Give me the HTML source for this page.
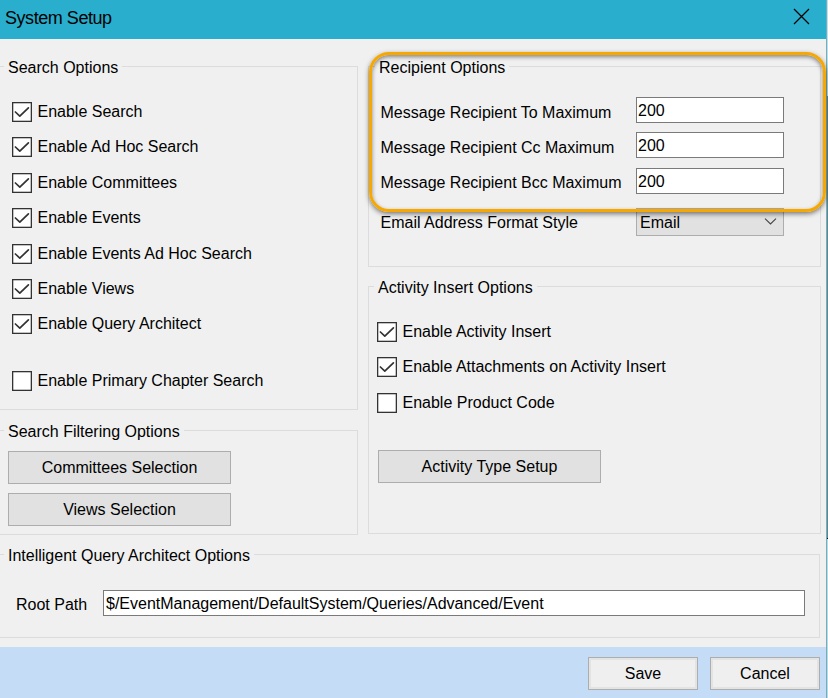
<!DOCTYPE html>
<html><head><meta charset="utf-8">
<style>
html,body{margin:0;padding:0;}
body{width:828px;height:698px;position:relative;overflow:hidden;background:#f0f0f0;font-family:"Liberation Sans",sans-serif;font-size:16px;color:#000;}
.a{position:absolute;}
.t{position:absolute;white-space:nowrap;line-height:18px;height:18px;}
.gb{position:absolute;box-sizing:border-box;border:1px solid #dcdcdc;}
.gt{position:absolute;white-space:nowrap;line-height:18px;background:#f0f0f0;padding:0 4px;}
.cb{position:absolute;width:20px;height:20px;}
.cb svg{position:absolute;left:0;top:0;}
.btn{position:absolute;box-sizing:border-box;border:1px solid #adadad;background:#e1e1e1;text-align:center;line-height:31px;}
.tb{position:absolute;box-sizing:border-box;border:1px solid #7a7a7a;background:#fff;line-height:18px;}
.fbtn{position:absolute;box-sizing:border-box;border:1px solid #adadad;background:#efefef;box-shadow:inset 0 0 0 2px #e3e3e3;text-align:center;line-height:31px;}
</style></head><body>

<!-- title bar -->
<div class="a" style="left:0;top:0;width:826px;height:39px;background:#29aecd;"></div>
<div class="t" style="left:5px;top:9px;font-size:18px;letter-spacing:-0.45px;">System Setup</div>
<svg class="a" style="left:793px;top:8px;" width="17" height="17" viewBox="0 0 17 17"><path d="M1 1L16 16M16 1L1 16" stroke="#000" stroke-width="1.2"/></svg>
<!-- window border right -->
<div class="a" style="left:826px;top:0;width:1px;height:698px;background:#5cb6cc;"></div>
<div class="a" style="left:827px;top:0;width:1px;height:96px;background:#d6d6d6;"></div><div class="a" style="left:827px;top:96px;width:1px;height:442px;background:#7c7c7c;"></div><div class="a" style="left:827px;top:538px;width:1px;height:1px;background:#000;"></div><div class="a" style="left:827px;top:539px;width:1px;height:159px;background:#d2d2d2;"></div>

<!-- Search Options group -->
<div class="gb" style="left:-10px;top:66px;width:368px;height:344px;"></div>
<div class="gt" style="left:4px;top:59px;">Search Options</div>

<div class="cb" style="left:12px;top:102px;"><svg width="20" height="20"><rect x="0.65" y="0.65" width="18.7" height="18.7" fill="#fff" stroke="#333" stroke-width="1.3"/><path d="M3.4 10L7.8 14.2L16.4 5.8" fill="none" stroke="#333" stroke-width="1.7" stroke-linecap="round" stroke-linejoin="round"/></svg></div>
<div class="t" style="left:37.5px;top:103px;">Enable Search</div>
<div class="cb" style="left:12px;top:137px;"><svg width="20" height="20"><rect x="0.65" y="0.65" width="18.7" height="18.7" fill="#fff" stroke="#333" stroke-width="1.3"/><path d="M3.4 10L7.8 14.2L16.4 5.8" fill="none" stroke="#333" stroke-width="1.7" stroke-linecap="round" stroke-linejoin="round"/></svg></div>
<div class="t" style="left:37.5px;top:138px;">Enable Ad Hoc Search</div>
<div class="cb" style="left:12px;top:173px;"><svg width="20" height="20"><rect x="0.65" y="0.65" width="18.7" height="18.7" fill="#fff" stroke="#333" stroke-width="1.3"/><path d="M3.4 10L7.8 14.2L16.4 5.8" fill="none" stroke="#333" stroke-width="1.7" stroke-linecap="round" stroke-linejoin="round"/></svg></div>
<div class="t" style="left:37.5px;top:174px;">Enable Committees</div>
<div class="cb" style="left:12px;top:208px;"><svg width="20" height="20"><rect x="0.65" y="0.65" width="18.7" height="18.7" fill="#fff" stroke="#333" stroke-width="1.3"/><path d="M3.4 10L7.8 14.2L16.4 5.8" fill="none" stroke="#333" stroke-width="1.7" stroke-linecap="round" stroke-linejoin="round"/></svg></div>
<div class="t" style="left:37.5px;top:209px;">Enable Events</div>
<div class="cb" style="left:12px;top:244px;"><svg width="20" height="20"><rect x="0.65" y="0.65" width="18.7" height="18.7" fill="#fff" stroke="#333" stroke-width="1.3"/><path d="M3.4 10L7.8 14.2L16.4 5.8" fill="none" stroke="#333" stroke-width="1.7" stroke-linecap="round" stroke-linejoin="round"/></svg></div>
<div class="t" style="left:37.5px;top:245px;">Enable Events Ad Hoc Search</div>
<div class="cb" style="left:12px;top:279px;"><svg width="20" height="20"><rect x="0.65" y="0.65" width="18.7" height="18.7" fill="#fff" stroke="#333" stroke-width="1.3"/><path d="M3.4 10L7.8 14.2L16.4 5.8" fill="none" stroke="#333" stroke-width="1.7" stroke-linecap="round" stroke-linejoin="round"/></svg></div>
<div class="t" style="left:37.5px;top:280px;">Enable Views</div>
<div class="cb" style="left:12px;top:314px;"><svg width="20" height="20"><rect x="0.65" y="0.65" width="18.7" height="18.7" fill="#fff" stroke="#333" stroke-width="1.3"/><path d="M3.4 10L7.8 14.2L16.4 5.8" fill="none" stroke="#333" stroke-width="1.7" stroke-linecap="round" stroke-linejoin="round"/></svg></div>
<div class="t" style="left:37.5px;top:315px;">Enable Query Architect</div>
<div class="cb" style="left:12px;top:371px;"><svg width="20" height="20"><rect x="0.65" y="0.65" width="18.7" height="18.7" fill="#fff" stroke="#333" stroke-width="1.3"/></svg></div>
<div class="t" style="left:37.5px;top:372px;">Enable Primary Chapter Search</div>

<!-- Search Filtering Options -->
<div class="gb" style="left:-10px;top:430px;width:368px;height:105px;"></div>
<div class="gt" style="left:4px;top:423px;">Search Filtering Options</div>
<div class="btn" style="left:8px;top:451px;width:223px;height:33px;">Committees Selection</div>
<div class="btn" style="left:8px;top:493px;width:223px;height:33px;">Views Selection</div>

<!-- Recipient Options -->
<div class="gb" style="left:368px;top:66px;width:453px;height:201px;"></div>
<div class="gt" style="left:375px;top:59px;">Recipient Options</div>
<div class="t" style="left:380.5px;top:104px;">Message Recipient To Maximum</div>
<div class="t" style="left:380.5px;top:139px;">Message Recipient Cc Maximum</div>
<div class="t" style="left:380.5px;top:174px;">Message Recipient Bcc Maximum</div>
<div class="tb" style="left:636px;top:97px;width:148px;height:26px;"><span class="t" style="left:1px;top:4px;">200</span></div>
<div class="tb" style="left:636px;top:132px;width:148px;height:26px;"><span class="t" style="left:1px;top:4px;">200</span></div>
<div class="tb" style="left:636px;top:168px;width:148px;height:26px;"><span class="t" style="left:1px;top:4px;">200</span></div>
<div class="t" style="left:380.5px;top:214px;">Email Address Format Style</div>
<div class="a" style="left:636px;top:208px;width:148px;height:28px;box-sizing:border-box;border:1px solid #adadad;background:#e1e1e1;"><span class="t" style="left:3px;top:5px;">Email</span>
<svg class="a" style="left:127px;top:9px;" width="13" height="8"><path d="M1 0.6L6.5 6L12 0.6" fill="none" stroke="#444" stroke-width="1.1"/></svg></div>

<!-- Activity Insert Options -->
<div class="gb" style="left:368px;top:286px;width:453px;height:248px;"></div>
<div class="gt" style="left:374px;top:279px;">Activity Insert Options</div>
<div class="cb" style="left:377px;top:322px;"><svg width="20" height="20"><rect x="0.65" y="0.65" width="18.7" height="18.7" fill="#fff" stroke="#333" stroke-width="1.3"/><path d="M3.4 10L7.8 14.2L16.4 5.8" fill="none" stroke="#333" stroke-width="1.7" stroke-linecap="round" stroke-linejoin="round"/></svg></div>
<div class="t" style="left:402.5px;top:323px;">Enable Activity Insert</div>
<div class="cb" style="left:377px;top:357px;"><svg width="20" height="20"><rect x="0.65" y="0.65" width="18.7" height="18.7" fill="#fff" stroke="#333" stroke-width="1.3"/><path d="M3.4 10L7.8 14.2L16.4 5.8" fill="none" stroke="#333" stroke-width="1.7" stroke-linecap="round" stroke-linejoin="round"/></svg></div>
<div class="t" style="left:402.5px;top:358px;">Enable Attachments on Activity Insert</div>
<div class="cb" style="left:377px;top:393px;"><svg width="20" height="20"><rect x="0.65" y="0.65" width="18.7" height="18.7" fill="#fff" stroke="#333" stroke-width="1.3"/></svg></div>
<div class="t" style="left:402.5px;top:394px;">Enable Product Code</div>
<div class="btn" style="left:378px;top:450px;width:223px;height:33px;">Activity Type Setup</div>

<!-- Intelligent Query Architect Options -->
<div class="gb" style="left:-10px;top:554px;width:830px;height:84px;"></div>
<div class="gt" style="left:4px;top:547px;">Intelligent Query Architect Options</div>
<div class="t" style="left:16px;top:596px;">Root Path</div>
<div class="tb" style="left:103px;top:590px;width:702px;height:26px;"><span class="t" style="left:2px;top:4px;">$/EventManagement/DefaultSystem/Queries/Advanced/Event</span></div>

<!-- footer -->
<div class="a" style="left:0;top:647px;width:826px;height:51px;background:#c5dcf6;"></div>
<div class="fbtn" style="left:588px;top:657px;width:110px;height:33px;">Save</div>
<div class="fbtn" style="left:710px;top:657px;width:110px;height:33px;">Cancel</div>

<!-- orange highlight -->
<div class="a" style="left:369px;top:52px;width:457px;height:160px;box-sizing:border-box;border:3px solid #f6a800;border-radius:20px;box-shadow:0 2px 5px rgba(0,0,0,.5), inset 0 2px 4px rgba(0,0,0,.45);"></div>

</body></html>
